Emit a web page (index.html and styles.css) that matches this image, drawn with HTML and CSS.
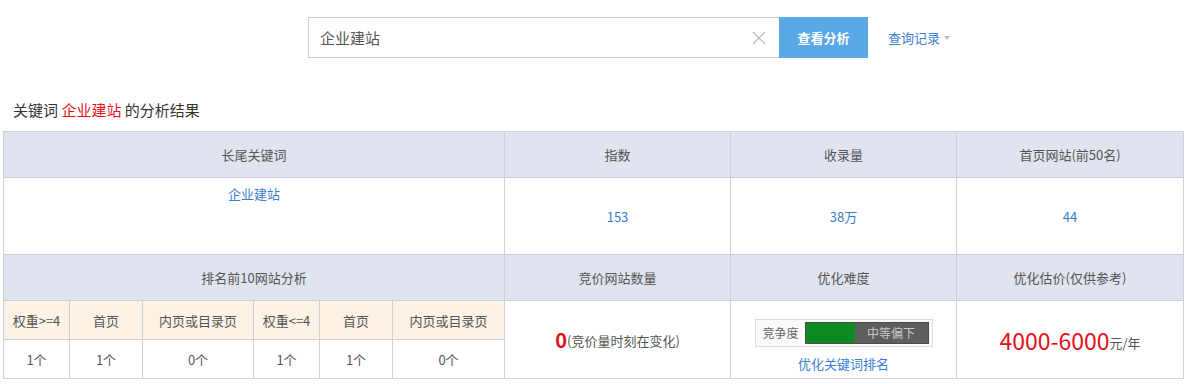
FILE: index.html
```html
<!DOCTYPE html>
<html>
<head>
    <meta charset="UTF-8"/>
    <title>关键词分析</title>
    <link rel="stylesheet" href="styles.css">
</head>
<body>
<div class="page">
    <!-- Search bar -->
    <div class="search-bar">
        <div class="search-box">
            <span class="search-text">企业建站</span>
            <svg class="clear-icon" width="14" height="14" viewBox="0 0 14 14">
                <path d="M1 1 L13 13 M13 1 L1 13" stroke="#b5b5b5" stroke-width="1.2" fill="none"/>
            </svg>
        </div>
        <button class="search-btn">查看分析</button>
        <a class="history-link">查询记录<span class="caret"></span></a>
    </div>

    <!-- Result title -->
    <div class="result-title">关键词 <span class="kw">企业建站</span> 的分析结果</div>

    <table class="result-table">
        <colgroup>
            <col style="width:66px"><col style="width:73px"><col style="width:111px">
            <col style="width:66px"><col style="width:73px"><col style="width:112px">
            <col style="width:226px"><col style="width:226px"><col style="width:227px">
        </colgroup>
        <tr class="head-row">
            <th colspan="6">长尾关键词</th>
            <th>指数</th>
            <th>收录量</th>
            <th>首页网站(前50名)</th>
        </tr>
        <tr class="data-row">
            <td colspan="6" class="top-cell"><div class="top-text"><a class="link">企业建站</a></div></td>
            <td><a class="link">153</a></td>
            <td><a class="link">38万</a></td>
            <td><a class="link">44</a></td>
        </tr>
        <tr class="head-row">
            <th colspan="6">排名前10网站分析</th>
            <th>竞价网站数量</th>
            <th>优化难度</th>
            <th>优化估价(仅供参考)</th>
        </tr>
        <tr class="sub-row">
            <td class="sub-head">权重&gt;=4</td>
            <td class="sub-head">首页</td>
            <td class="sub-head">内页或目录页</td>
            <td class="sub-head">权重&lt;=4</td>
            <td class="sub-head">首页</td>
            <td class="sub-head">内页或目录页</td>
            <td rowspan="2"><span class="big-zero">0</span>(竞价量时刻在变化)</td>
            <td rowspan="2" class="difficulty">
                <div class="compete">
                    <span class="compete-label">竞争度</span>
                    <span class="compete-bar">
                        <span class="compete-fill"></span>
                        <span class="compete-text">中等偏下</span>
                    </span>
                </div>
                <a class="link opt-link">优化关键词排名</a>
            </td>
            <td rowspan="2"><span class="price">4000-6000</span>元/年</td>
        </tr>
        <tr class="sub-row">
            <td>1个</td>
            <td>1个</td>
            <td>0个</td>
            <td>1个</td>
            <td>1个</td>
            <td>0个</td>
        </tr>
    </table>
</div>
</body>
</html>
```

FILE: styles.css
```css
body {
margin: 0;
font-family: "Microsoft YaHei", "Noto Sans CJK SC", sans-serif;
font-size: 13px;
color: #555;
background: #fff;
}
.page {
padding: 0 3px;
width: 1180px;
}
.search-bar {
display: flex;
align-items: center;
margin-top: 17px;
margin-left: 305px;
height: 41px;
}
.search-box {
box-sizing: border-box;
display: flex;
align-items: center;
justify-content: space-between;
width: 471px;
height: 41px;
border: 1px solid #ccc;
border-right: none;
padding: 0 13px 0 11px;
}
.search-text {
font-size: 15px;
color: #555;
}
.clear-icon {
display: block;
}
.search-btn {
width: 89px;
height: 41px;
border: none;
background: #5aa8e6;
color: #fff;
font-family: inherit;
font-size: 13px;
font-weight: bold;
padding: 0;
}
.history-link {
margin-left: 20px;
color: #3b7ed0;
font-size: 13px;
display: flex;
align-items: center;
}
.caret {
display: inline-block;
width: 0;
height: 0;
margin-left: 4px;
border-left: 3px solid transparent;
border-right: 3px solid transparent;
border-top: 4px solid #bbb;
}
.result-title {
margin-top: 40px;
margin-left: 10px;
font-size: 15px;
color: #333;
height: 33px;
line-height: 24px;
}
.kw {
color: #e4101a;
}
.result-table {
border-collapse: collapse;
table-layout: fixed;
width: 1181px;
}
.result-table th,
.result-table td {
border: 1px solid #ccd0da;
text-align: center;
padding: 0;
font-weight: normal;
}
.head-row th {
height: 45px;
background: #dfe4ee;
color: #555;
}
.data-row td {
height: 76px;
}
.data-row .top-cell {
vertical-align: top;
}
.top-text {
margin-top: 6px;
}
.sub-row td {
height: 38px;
}
.sub-row .sub-head {
background: #fcf2e5;
}
.link {
color: #3b7ed0;
}
.big-zero {
color: #e4101a;
font-size: 20px;
font-weight: bold;
vertical-align: -2px;
}
.result-table .difficulty {
padding-top: 12px;
}
.compete {
box-sizing: border-box;
display: inline-flex;
align-items: center;
width: 178px;
height: 28px;
border: 1px solid #ddd;
background: #fafafa;
padding: 0 2px 0 7px;
}
.compete-label {
font-size: 12px;
color: #666;
margin-right: 6px;
}
.compete-bar {
display: flex;
width: 124px;
height: 22px;
background: #5e5e5e;
border: 1px solid #4a4a4a;
box-sizing: border-box;
}
.compete-fill {
width: 49px;
background: #0b8a1f;
}
.compete-text {
flex: 1;
line-height: 20px;
font-size: 12px;
color: #c8c8c8;
}
.opt-link {
display: block;
margin-top: 7px;
}
.price {
color: #e4101a;
font-size: 23px;
vertical-align: -2px;
}
```
